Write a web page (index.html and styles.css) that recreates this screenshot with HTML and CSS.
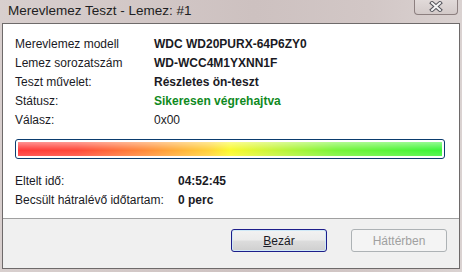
FILE: index.html
```html
<!DOCTYPE html>
<html lang="hu">
<head>
    <meta charset="UTF-8">
    <title>Merevlemez Teszt - Lemez: #1</title>
    <link rel="stylesheet" href="styles.css">
</head>
<body>
    <div class="window">
        <div class="titlebar">
            <span class="title">Merevlemez Teszt - Lemez: #1</span>
            <div class="close">
                <svg width="14" height="11" viewBox="0 0 14 11">
                    <path d="M3 2 L11 9 M11 2 L3 9" stroke="#55555c" stroke-width="4" stroke-linecap="square"/>
                    <path d="M3 2 L11 9 M11 2 L3 9" stroke="#f4f4f4" stroke-width="2" stroke-linecap="square"/>
                </svg>
            </div>
        </div>
        <div class="client">
            <div class="info">
                <div class="row"><span class="label">Merevlemez modell</span><span class="value bold">WDC WD20PURX-64P6ZY0</span></div>
                <div class="row"><span class="label">Lemez sorozatszám</span><span class="value bold">WD-WCC4M1YXNN1F</span></div>
                <div class="row"><span class="label">Teszt művelet:</span><span class="value bold">Részletes ön-teszt</span></div>
                <div class="row"><span class="label">Státusz:</span><span class="value bold ok">Sikeresen végrehajtva</span></div>
                <div class="row"><span class="label">Válasz:</span><span class="value">0x00</span></div>

                <div class="progress">
                    <div class="progress-fill"></div>
                </div>

                <div class="row time"><span class="label">Eltelt idő:</span><span class="value bold">04:52:45</span></div>
                <div class="row time"><span class="label">Becsült hátralévő időtartam:</span><span class="value bold">0 perc</span></div>
            </div>
            <div class="footer">
                <button class="btn default"><u>B</u>ezár</button>
                <button class="btn" disabled>Háttérben</button>
            </div>
        </div>
    </div>
</body>
</html>
```

FILE: styles.css
```css
body {
    margin: 0;
    padding: 0;
    font-family: "Liberation Sans", Arial, sans-serif;
    font-size: 12px;
    color: #1a1a24;
    background: #d3c9c8;
}
.window {
    width: 462px;
    height: 272px;
    display: flex;
    flex-direction: column;
    background: linear-gradient(to right, #d8cfce, #cdc1c0 55%, #d2c7c6 80%, #dad2d1);
}
.titlebar {
    height: 23px;
    display: flex;
    align-items: flex-start;
    justify-content: space-between;
    padding: 0 4px 0 8px;
}
.title {
    margin-top: 3px;
    font-size: 13.5px;
    color: #1e1e22;
}
.close {
    width: 42px;
    height: 15px;
    margin-top: -1px;
    border: 1px solid #8c7f7f;
    border-top: none;
    border-radius: 0 0 4px 4px;
    background: linear-gradient(#e2dbda, #d3cac9);
    display: flex;
    align-items: center;
    justify-content: center;
}
.client {
    margin: 0 2px 3px 2px;
    border: 1px solid #6e6a6a;
    flex: 1;
    display: flex;
    flex-direction: column;
    background: #f0f0f0;
}
.info {
    height: 195px;
    background: #fff;
    border-bottom: 1px solid #a0a0a0;
    padding: 10px 0 0 12px;
    box-sizing: border-box;
}
.row {
    display: flex;
    height: 19px;
    align-items: center;
}
.label {
    width: 139px;
    flex-shrink: 0;
}
.time .label {
    width: 163px;
}
.bold {
    font-weight: bold;
}
.ok {
    color: #0f8a1e;
}
.progress {
    margin: 10px 0 12px 0;
    width: 430px;
    height: 20px;
    box-sizing: border-box;
    border: 1px solid #0b3c6e;
    border-radius: 3px;
    padding: 2px;
    background: #fff;
}
.progress-fill {
    height: 100%;
    background:
        linear-gradient(rgba(255,255,255,0.45), rgba(255,255,255,0.1) 45%, rgba(255,255,255,0) 60%, rgba(255,255,255,0.15)),
        linear-gradient(to right, #ff3a3a, #ff4a3a 14%, #ff8c3a 30%, #ffd23a 45%, #fafa2e 50%, #c8f53a 60%, #78f53a 75%, #3af53a);
}
.footer {
    flex: 1;
    display: flex;
    justify-content: flex-end;
    align-items: flex-start;
    gap: 24px;
    padding: 10px 12px 0 0;
}
.btn {
    width: 96px;
    height: 23px;
    font-family: "Liberation Sans", Arial, sans-serif;
    font-size: 12px;
    color: #1a1a24;
    border: 1px solid #707070;
    border-radius: 3px;
    background: linear-gradient(#f2f2f2, #ebebeb 48%, #dddddd 52%, #cfcfcf);
    padding: 0;
}
.btn.default {
    border-color: #1d1d8a;
    box-shadow: inset 0 0 0 1px #cfe9f7;
}
.btn:disabled {
    color: #a0a0a0;
    border-color: #adb2b5;
    background: #f4f4f4;
}
```
